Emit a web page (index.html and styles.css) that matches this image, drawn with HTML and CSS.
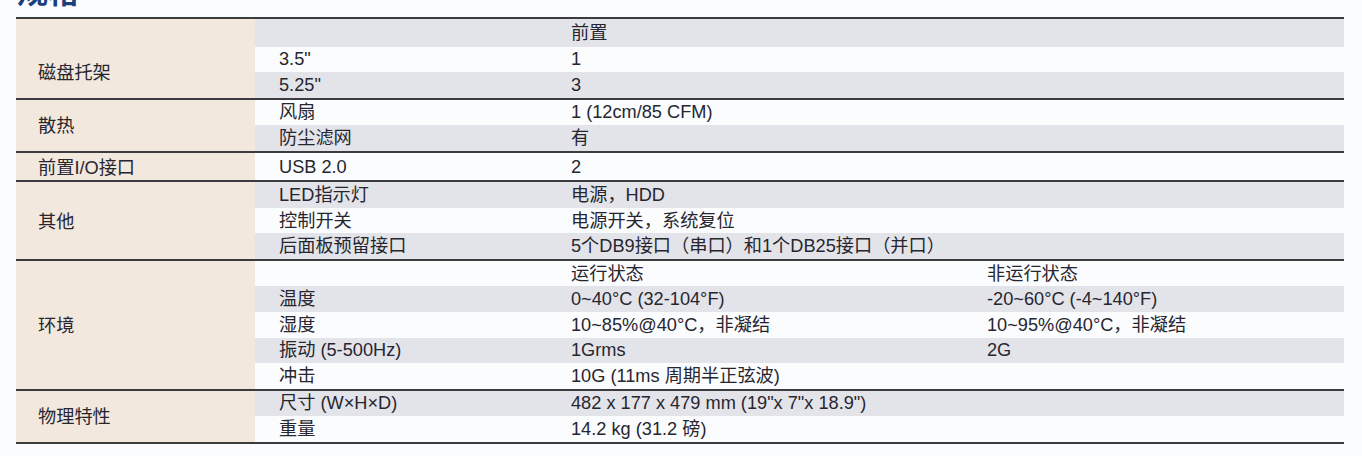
FILE: index.html
```html
<!DOCTYPE html>
<html lang="zh-CN">
<head>
<meta charset="utf-8">
<title>规格</title>
<link rel="stylesheet" href="styles.css">
</head>
<body>
<div class="page">
  <h2 class="title">规格</h2>
  <table class="spec">
    <colgroup>
      <col class="c1"><col class="c2"><col class="c3"><col class="c4">
    </colgroup>
    <tbody>
      <tr class="g"><td class="label"></td><td></td><td>前置</td><td></td></tr>
      <tr><td class="label" rowspan="2">磁盘托架</td><td>3.5"</td><td>1</td><td></td></tr>
      <tr class="g"><td>5.25"</td><td>3</td><td></td></tr>
    </tbody>
    <tbody>
      <tr><td class="label" rowspan="2">散热</td><td>风扇</td><td>1 (12cm/85 CFM)</td><td></td></tr>
      <tr class="g"><td>防尘滤网</td><td>有</td><td></td></tr>
    </tbody>
    <tbody>
      <tr><td class="label">前置I/O接口</td><td>USB 2.0</td><td>2</td><td></td></tr>
    </tbody>
    <tbody>
      <tr class="g"><td class="label" rowspan="3">其他</td><td>LED指示灯</td><td>电源，HDD</td><td></td></tr>
      <tr><td>控制开关</td><td>电源开关，系统复位</td><td></td></tr>
      <tr class="g"><td>后面板预留接口</td><td>5个DB9接口（串口）和1个DB25接口（并口）</td><td></td></tr>
    </tbody>
    <tbody>
      <tr><td class="label" rowspan="5">环境</td><td></td><td>运行状态</td><td>非运行状态</td></tr>
      <tr class="g"><td>温度</td><td>0~40°C (32-104°F)</td><td>-20~60°C (-4~140°F)</td></tr>
      <tr><td>湿度</td><td>10~85%@40°C，非凝结</td><td>10~95%@40°C，非凝结</td></tr>
      <tr class="g"><td>振动 (5-500Hz)</td><td>1Grms</td><td>2G</td></tr>
      <tr><td>冲击</td><td>10G (11ms 周期半正弦波)</td><td></td></tr>
    </tbody>
    <tbody>
      <tr class="g"><td class="label" rowspan="2">物理特性</td><td>尺寸 (W×H×D)</td><td>482 x 177 x 479 mm (19"x 7"x 18.9")</td><td></td></tr>
      <tr><td>重量</td><td>14.2 kg (31.2 磅)</td><td></td></tr>
    </tbody>
  </table>
</div>
</body>
</html>
```

FILE: styles.css
```css
html, body {
  margin: 0;
  padding: 0;
  background: #fbfcfd;
  overflow: hidden;
}

.page {
  padding: 0 18px 0 16px;
}

.title {
  margin: -25px 0 12px 1px;
  font-family: "Noto Sans CJK SC", sans-serif;
  font-size: 31px;
  line-height: 30px;
  font-weight: 700;
  color: #1b3f7c;
}

.spec {
  width: 100%;
  table-layout: fixed;
  border-collapse: collapse;
  font-family: "Liberation Sans", "Noto Sans CJK SC", sans-serif;
  font-size: 18.2px;
  color: #27262f;
}

.c1 { width: 239px; }
.c2 { width: 292px; }
.c3 { width: 416px; }

.spec tbody {
  border-top: 2px solid #3b3b40;
}

.spec tbody:last-child {
  border-bottom: 2px solid #3b3b40;
}

.spec td {
  height: 25.55px;
  padding: 0 0 0 24px;
  line-height: 20px;
  vertical-align: middle;
  white-space: nowrap;
  background: #fbfcfe;
}

.spec tr.g td {
  background: #e3e4e9;
}

.spec tr td.label {
  background: #f2e8de;
  padding-left: 22px;
  padding-top: 2px;
}
```
